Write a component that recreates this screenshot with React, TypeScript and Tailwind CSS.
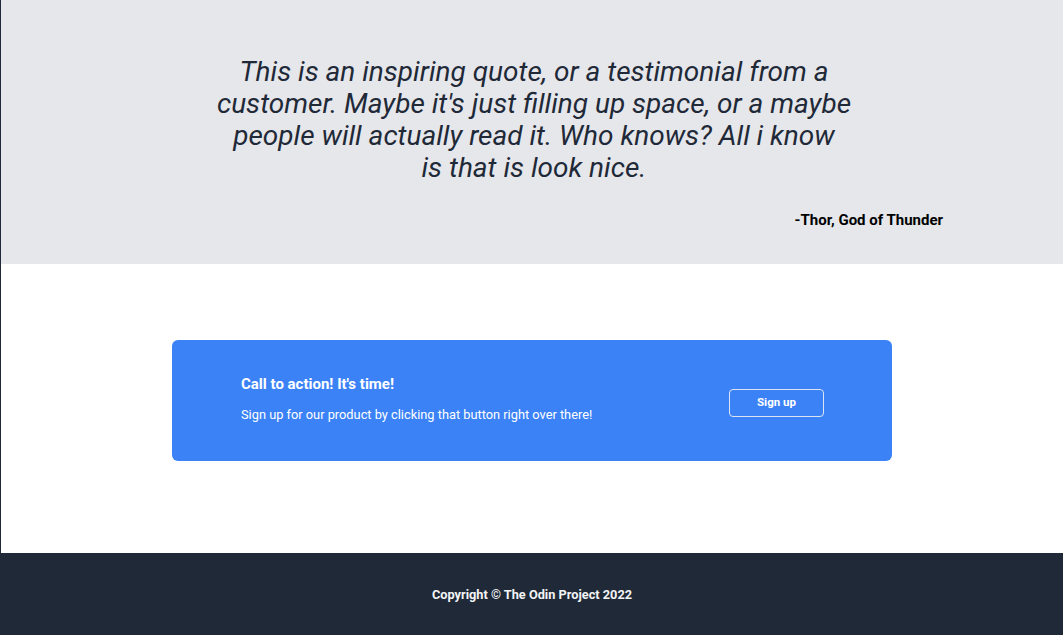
export default function App() {
  return (
    <div className="min-h-[635px] flex flex-col border-l border-[#1f2937] bg-white" style={{ fontFamily: "Roboto, 'Liberation Sans', sans-serif" }}>
      <section className="h-[264px] bg-[#e5e7eb] flex flex-col items-center pt-[56px]">
        <p className="w-[660px] ml-[4px] text-center italic font-normal text-[28px] leading-[32px] text-[#1f2937]">
          This is an inspiring quote, or a testimonial from a<br />
          customer. Maybe it's just filling up space, or a maybe<br />
          people will actually read it. Who knows? All i know<br />
          is that is look nice.
        </p>
        <div className="self-stretch pr-[120px] text-right font-bold text-[15px] text-black mt-[25px]">-Thor, God of Thunder</div>
      </section>
      <section className="h-[289px] flex justify-center pt-[76px]">
        <div className="w-[720px] h-[121px] bg-[#3b82f6] rounded-md flex items-center justify-between pl-[69px] pr-[68px]">
          <div className="flex flex-col text-white">
            <div className="font-bold text-[15px] leading-5 -mt-[3px]">Call to action! It's time!</div>
            <div className="text-[12.8px] leading-5 mt-[11px]">Sign up for our product by clicking that button right over there!</div>
          </div>
          <button className="w-[95px] h-[28px] border border-[#dbe4f0] rounded text-white text-[11.5px] font-bold mt-[4px]">Sign up</button>
        </div>
      </section>
      <footer className="flex-1 h-[82px] bg-[#1f2937] flex items-center justify-center pt-[2px]">
        <div className="text-[#f3f4f6] font-bold text-[12.75px]">Copyright © The Odin Project 2022</div>
      </footer>
    </div>
  );
}
